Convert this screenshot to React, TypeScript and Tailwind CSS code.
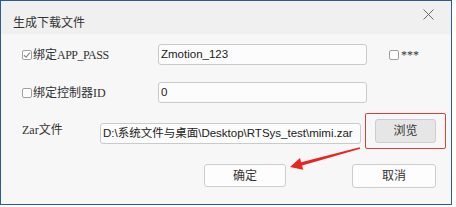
function Check({ checked }: { checked?: boolean }) {
  return (
    <span className="w-[10px] h-[10px] border border-[#a0a0a0] rounded-[2px] bg-white flex items-center justify-center shrink-0">
      {checked && (
        <svg width="8" height="8" viewBox="0 0 8 8">
          <path d="M1 4.2 L3.1 6.2 L7 1.6" fill="none" stroke="#8a8a8a" strokeWidth="1.2" />
        </svg>
      )}
    </span>
  );
}

function Field({ w, children }: { w: string; children?: React.ReactNode }) {
  return (
    <div
      className={`${w} h-[21px] border border-[#cacaca] rounded-[3px] bg-[#fcfcfc] flex items-center pl-[2px] text-[11.5px] text-[#222] whitespace-nowrap overflow-hidden`}
    >
      {children}
    </div>
  );
}

function Btn({ w, bg, children }: { w: string; bg: string; children: React.ReactNode }) {
  return (
    <div
      className={`${w} ${bg} border border-[#cdcdcd] rounded-[3px] flex items-center justify-center text-[12px] text-[#333]`}
    >
      {children}
    </div>
  );
}

export default function App() {
  return (
    <div className="w-[456px] h-[207px] bg-white relative font-['Liberation_Sans','Noto_Sans_CJK_SC',sans-serif]">
      <div className="w-[452px] h-[205px] border border-[#2c5a95] flex flex-col">
        <div className="h-[33px] bg-[#f0f0f0] flex justify-between pl-[12px] pr-[17px]">
          <span className="mt-[15px] text-[12px] leading-[14px] text-[#333]">生成下载文件</span>
          <svg className="mt-[8px]" width="11" height="11" viewBox="0 0 11 11">
            <path d="M0.5 0.5 L10.5 10.5 M10.5 0.5 L0.5 10.5" stroke="#6a6a6a" strokeWidth="1" />
          </svg>
        </div>

        <div className="flex-1 bg-[#f7f7f7] pt-[10px] pl-[21px]">
          <div className="flex items-center">
            <div className="w-[136px] flex items-center gap-[1px] text-[12px] text-[#333] font-['Noto_Sans_CJK_SC',sans-serif]">
              <Check checked />
              <span>
                绑定
                <span className="tracking-[-0.5px] font-['Liberation_Serif',serif]">APP_PASS</span>
              </span>
            </div>
            <Field w="w-[209px]">Zmotion_123</Field>
            <div className="ml-[22px] flex items-center gap-[2px] text-[12px] text-[#333] font-['Liberation_Serif',serif]">
              <Check />
              <span>***</span>
            </div>
          </div>

          <div className="flex items-center mt-[17px]">
            <div className="w-[136px] flex items-center gap-[1px] text-[12px] text-[#333] font-['Noto_Sans_CJK_SC',sans-serif]">
              <Check />
              <span>
                绑定控制器
                <span className="font-['Liberation_Serif',serif]">ID</span>
              </span>
            </div>
            <Field w="w-[209px]">0</Field>
          </div>

          <div className="flex items-start mt-[10px]">
            <div className="w-[78px] mt-[9px] text-[12px] leading-[14px] text-[#333] font-['Noto_Sans_CJK_SC',sans-serif]">
              <span className="font-['Liberation_Serif',serif]">Zar</span>
              文件
            </div>
            <div className="mt-[10px]">
              <Field w="w-[261px]">D:\系统文件与桌面\Desktop\RTSys_test\mimi.zar</Field>
            </div>
            <div className="ml-[4px] w-[81px] h-[36px] border border-[#d9403a] rounded-[2px] pl-[9px] pt-[5px]">
              <Btn w="w-[61px] h-[24px]" bg="bg-[#e6e6e6]">
                浏览
              </Btn>
            </div>
          </div>

          <div className="flex mt-[15px] gap-[66px] pl-[182px]">
            <Btn w="w-[82px] h-[23px]" bg="bg-[#fdfdfd]">
              确定
            </Btn>
            <Btn w="w-[84px] h-[24px]" bg="bg-[#fdfdfd]">
              取消
            </Btn>
          </div>
        </div>
      </div>

      <svg className="absolute left-0 top-0" width="456" height="207" viewBox="0 0 456 207">
        <polygon
          points="290,167 303.2,169.7 302.1,165.6 360.2,148.7 359.8,147.3 301.1,162.2 300,158.1"
          fill="#e8261f"
        />
      </svg>
    </div>
  );
}
